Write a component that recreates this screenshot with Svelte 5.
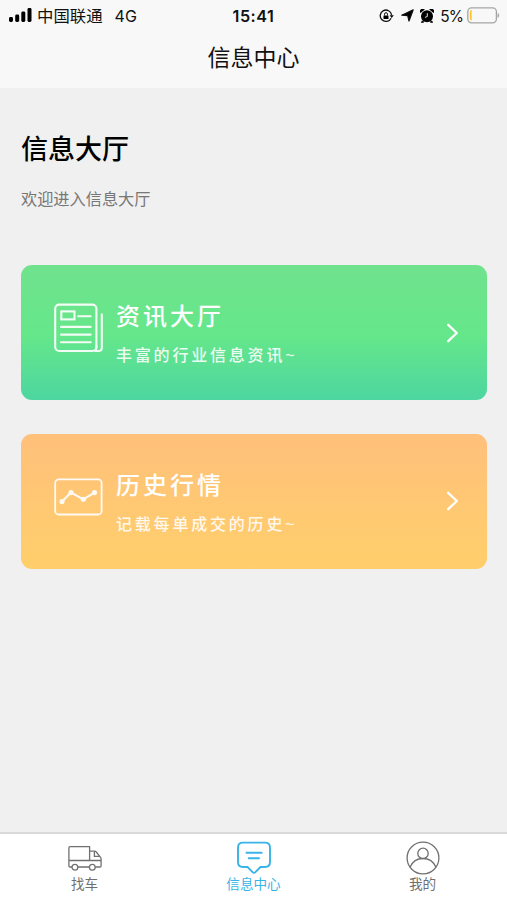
<script lang="ts">
  type Card = { id: string; title: string; desc: string };
  type Tab = { id: string; label: string };

  const cards: Card[] = [
    { id: 'news', title: '资讯大厅', desc: '丰富的行业信息资讯~' },
    { id: 'history', title: '历史行情', desc: '记载每单成交的历史~' },
  ];

  const tabs: Tab[] = [
    { id: 'find', label: '找车' },
    { id: 'info', label: '信息中心' },
    { id: 'mine', label: '我的' },
  ];

  let active = $state('info');
</script>

<div class="screen">
  <header class="header">
    <div class="status">
      <div class="status__left">
        <svg class="status__signal" width="24" height="14" viewBox="0 0 24 14">
          <rect x="0" y="9" width="4" height="5" rx="1.4" />
          <rect x="6.2" y="6.5" width="4" height="7.5" rx="1.4" />
          <rect x="12.3" y="3.5" width="4" height="10.5" rx="1.4" />
          <rect x="18.5" y="0" width="4" height="14" rx="1.4" />
        </svg>
        <span class="status__carrier">中国联通</span>
        <span class="status__net">4G</span>
      </div>
      <span class="status__time">15:41</span>
      <div class="status__right">
        <svg width="15" height="14" viewBox="0 0 15 14">
          <path d="M12.1 9.2A5.7 5.7 0 1 1 12.6 6" fill="none" stroke="#111" stroke-width="1.3" />
          <path d="M10.6 6.2h4.2l-2.1 2.8z" />
          <rect x="4.5" y="6.4" width="5" height="3.7" rx="0.5" />
          <path d="M5.5 6.5V5.2a1.5 1.5 0 0 1 3 0v1.3" fill="none" stroke="#111" stroke-width="1" />
        </svg>
        <svg class="status__arrow" width="13" height="13" viewBox="0 0 13 13">
          <path d="M12.2.8 8 12 6.7 6.6.8 6.2z" stroke="#111" stroke-width="1.2" stroke-linejoin="round" />
        </svg>
        <svg class="status__alarm" width="14" height="14" viewBox="0 0 14 14">
          <circle cx="7" cy="7.3" r="6" />
          <path d="M.5 4A2.7 2.7 0 0 1 4.8.6zM13.5 4A2.7 2.7 0 0 0 9.2.6zM2 11.6.8 13.8h2.6l1-1zM12 11.6l1.2 2.2h-2.6l-1-1z" />
          <path d="M7.3 4.2v3.3L5 8.4" fill="none" stroke="#f8f8f8" stroke-width=".9" />
        </svg>
        <span class="status__percent">5%</span>
        <svg class="status__battery" width="33" height="17" viewBox="0 0 33 17">
          <rect x=".8" y=".8" width="28.6" height="15" rx="3.8" fill="none" stroke="#a5a5a5" stroke-width="1.3" />
          <path d="M30.6 5.8q1.6 1 1.6 2.6t-1.6 2.6z" fill="#a5a5a5" />
          <path d="M4.6 2.8v11q-1.8-.4-1.8-2.3V5q0-1.8 1.8-2.2z" fill="#fbc52d" />
        </svg>
      </div>
    </div>
    <h1 class="header__title">信息中心</h1>
  </header>

  <main class="content">
    <h2 class="content__title">信息大厅</h2>
    <p class="content__intro">欢迎进入信息大厅</p>

    <div class="cards">
      {#each cards as card (card.id)}
        <button class="card card--{card.id}">
          <svg class="card__icon" width="50" height="50" viewBox="0 0 50 50">
            {#if card.id === 'news'}
              <rect x="1.2" y="1.6" width="41.2" height="46.4" rx="4" />
              <path d="M40.5 48h3.7q3.6 0 3.6-3.6V10.5M42.4 42v2.4q0 2.8-1.8 3.6" />
              <rect x="7.3" y="8.4" width="13.2" height="8" />
              <path d="M24.2 13.2h12.5M7 23.9h29.7M7 31.6h29.7M7 39.2h29.7" stroke-linecap="round" />
            {:else}
              <rect x="1.2" y="7.3" width="46.4" height="35.2" rx="3.5" stroke-width="1.8" />
              <path d="M8 29.6 17 20.6 29.3 27.3 40.5 20.6" />
              <g class="card__dots">
                <circle cx="8" cy="29.6" r="2.6" />
                <circle cx="17" cy="20.6" r="2.6" />
                <circle cx="29.3" cy="27.3" r="2.6" />
                <circle cx="40.5" cy="20.6" r="2.6" />
              </g>
            {/if}
          </svg>
          <span class="card__text">
            <span class="card__title">{card.title}</span>
            <span class="card__desc">{card.desc}</span>
          </span>
          <svg class="card__chevron" width="14" height="20" viewBox="0 0 14 20">
            <path d="M2.2 1.8 10.8 10 2.2 18.2" />
          </svg>
        </button>
      {/each}
    </div>
  </main>

  <nav class="tabs">
    {#each tabs as tab (tab.id)}
      <button class="tab" class:tab--active={tab.id === active} onclick={() => (active = tab.id)}>
        <svg class="tab__icon" width="36" height="36" viewBox="0 0 36 36">
          {#if tab.id === 'find'}
            <path d="M5 27H3Q1.9 27 1.9 25.7V8Q1.9 6.6 3 6.6H22.6V20.5M22.4 27H10.8M22.6 11.2h5q1 0 1.7.8l4.2 5.3q.6.7.6 1.6v6.8Q34.1 27 32.8 27H28.3M1.9 20.5H34" />
            <path d="M27.4 11.5V16.4h5.4" />
            <circle cx="7.9" cy="27.2" r="2.9" />
            <circle cx="25.3" cy="27.2" r="2.9" />
          {:else if tab.id === 'info'}
            <path d="M7 2.6H29Q34 2.6 34 7.6V22Q34 27 29 27H24.5L19.4 32.1Q18 33.4 16.6 32.1L11.5 27H7Q2 27 2 22V7.6Q2 2.6 7 2.6z" />
            <path d="M10.5 12.7H25.7M12.8 18.2H23" stroke-linecap="round" />
          {:else}
            <circle cx="18" cy="18" r="15.9" />
            <circle cx="18" cy="13.4" r="5.2" />
            <path d="M5 27.3C7.5 21.5 12 18.5 18 18.5S28.5 21.5 31 27.3" />
          {/if}
        </svg>
        <span class="tab__label">{tab.label}</span>
      </button>
    {/each}
  </nav>
</div>

<style>
  :global(body) {
    margin: 0;
  }

  .screen {
    display: flex;
    flex-direction: column;
    height: 900px;
    overflow: hidden;
    background: #f0f0f0;
    font-family: 'Liberation Sans', 'Noto Sans CJK SC', sans-serif;
    color: #111;
  }

  button {
    margin: 0;
    padding: 0;
    border: 0;
    background: none;
    font-family: inherit;
    text-align: left;
  }

  svg {
    display: block;
    flex: none;
  }

  .header {
    height: 88px;
    background: #f8f8f8;
  }

  .status {
    display: grid;
    grid-template-columns: 1fr auto 1fr;
    align-items: center;
    height: 29px;
    padding: 0 7px 0 9px;
    font-size: 16px;
    line-height: 29px;
    white-space: nowrap;
  }

  .status__left,
  .status__right {
    display: flex;
    align-items: center;
  }

  .status__right {
    justify-content: flex-end;
  }

  .status__signal {
    margin-top: -1px;
  }

  .status__carrier {
    margin-left: 4px;
    padding-top: 2px;
    font-size: 16.4px;
  }

  .status__net {
    margin-left: 12px;
    padding-top: 1px;
    font-family: Inter, sans-serif;
    font-size: 16px;
  }

  .status__time {
    margin-right: 2px;
    padding-top: 1px;
    font-family: Inter, sans-serif;
    font-weight: 600;
    font-size: 16.2px;
    letter-spacing: 0.5px;
  }

  .status__arrow {
    margin-left: 7px;
  }

  .status__alarm {
    margin-left: 6px;
  }

  .status__percent {
    margin: 0 4px 0 6px;
    padding-top: 1px;
    font-family: Inter, sans-serif;
    font-size: 15.5px;
    letter-spacing: -0.9px;
  }

  .header__title {
    margin: 0;
    font-size: 23px;
    font-weight: 400;
    line-height: 58px;
    text-align: center;
  }

  .content {
    flex: 1;
    padding: 44px 20px 0 21px;
  }

  .content__title {
    margin: 0;
    color: #000;
    font-size: 27px;
    font-weight: 500;
    line-height: 36px;
  }

  .content__intro {
    margin: 19px 0 0;
    color: #777;
    font-size: 16.2px;
    line-height: 24px;
  }

  .cards {
    display: flex;
    flex-direction: column;
    gap: 33.5px;
    margin-top: 54px;
  }

  .card {
    display: flex;
    align-items: center;
    height: 135px;
    padding: 0 27px 0 33px;
    border-radius: 11px;
    color: #fff;
  }

  .card--news {
    background: linear-gradient(#70e28e 0%, #65e78a 52%, #4dd6a0 100%);
  }

  .card--history {
    background: linear-gradient(#ffc07b, #ffcf6b);
  }

  .card__icon {
    margin-top: -9px;
    fill: none;
    stroke: #fff;
    stroke-width: 2.1;
    opacity: 0.92;
  }

  .card__dots {
    fill: #fff;
    stroke: none;
  }

  .card__text {
    display: flex;
    flex: 1;
    flex-direction: column;
    gap: 6px;
    margin-left: 12px;
    padding-top: 7px;
  }

  .card__title {
    font-size: 24px;
    font-weight: 500;
    letter-spacing: 3px;
    line-height: 34px;
  }

  .card__desc {
    font-size: 16px;
    font-weight: 500;
    letter-spacing: 2.8px;
    line-height: 32px;
    opacity: 0.88;
  }

  .card__chevron {
    fill: none;
    stroke: #fff;
    stroke-width: 2.3;
    stroke-linecap: round;
    stroke-linejoin: round;
  }

  .tabs {
    display: grid;
    grid-template-columns: repeat(3, 1fr);
    height: 66px;
    border-top: 2px solid #dadada;
    background: #fff;
  }

  .tab {
    display: flex;
    flex-direction: column;
    align-items: center;
    padding-top: 6px;
    color: #707070;
  }

  .tab--active {
    color: #39b4e6;
  }

  .tab__icon {
    fill: none;
    stroke: currentColor;
    stroke-width: 1.3;
  }

  .tab--active .tab__icon {
    stroke-width: 1.9;
  }

  .tab__label {
    font-size: 13.6px;
    line-height: 17px;
  }
</style>
